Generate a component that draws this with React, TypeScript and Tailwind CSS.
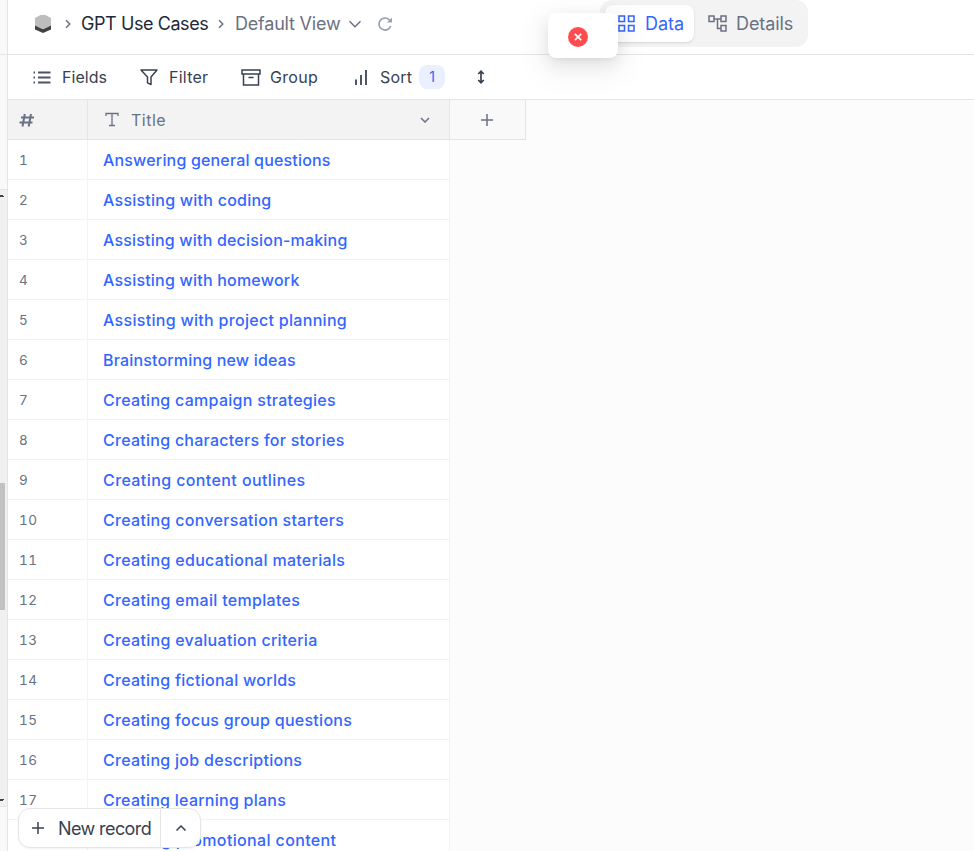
import React from "react";

const titles = [
  { title: "Answering general questions", tracking: "tracking-[0.17px]" },
  { title: "Assisting with coding", tracking: "tracking-[0.24px]" },
  { title: "Assisting with decision-making", tracking: "tracking-[0.19px]" },
  { title: "Assisting with homework", tracking: "tracking-[0.21px]" },
  { title: "Assisting with project planning", tracking: "tracking-[0.3px]" },
  { title: "Brainstorming new ideas", tracking: "tracking-[0.17px]" },
  { title: "Creating campaign strategies", tracking: "tracking-[0.28px]" },
  { title: "Creating characters for stories", tracking: "tracking-[0.26px]" },
  { title: "Creating content outlines", tracking: "tracking-[0.4px]" },
  { title: "Creating conversation starters", tracking: "tracking-[0.3px]" },
  { title: "Creating educational materials", tracking: "tracking-[0.3px]" },
  { title: "Creating email templates", tracking: "tracking-[0.31px]" },
  { title: "Creating evaluation criteria", tracking: "tracking-[0.29px]" },
  { title: "Creating fictional worlds", tracking: "tracking-[0.26px]" },
  { title: "Creating focus group questions", tracking: "tracking-[0.28px]" },
  { title: "Creating job descriptions", tracking: "tracking-[0.28px]" },
  { title: "Creating learning plans", tracking: "tracking-[0.25px]" },
  { title: "Creating promotional content", tracking: "tracking-[0.36px]" },
];

type IconProps = { className?: string; children: React.ReactNode; box: string; sw?: number };

function Icon({ className = "", children, box, sw = 1.5 }: IconProps) {
  return (
    <svg className={`shrink-0 ${className}`} viewBox={box} fill="none" stroke="currentColor" strokeWidth={sw}>
      {children}
    </svg>
  );
}

function Rail() {
  return (
    <div className="flex w-2 shrink-0 flex-col border-r border-[#e5e5e5] bg-[#f9f9f9]">
      <div className="h-[55px] shrink-0 border-b border-[#e5e5e5]" />
      <div className="h-[134px] shrink-0" />
      <div className="flex h-[618px] shrink-0 flex-col border-y border-[#e5e5e5] bg-[#f0f0f0]">
        <svg className="mt-1 h-1 w-[5px] shrink-0" viewBox="0 0 5 4">
          <path d="M0 1h3v1h1v1H0z" fill="#444" />
        </svg>
        <div className="mt-[285px] h-[127px] w-[5px] shrink-0 bg-[#c1c1c1]" />
        <svg className="mt-auto mb-1 h-1 w-[5px] shrink-0" viewBox="0 0 5 4">
          <path d="M0 1h4v1H3v1H0z" fill="#444" />
        </svg>
      </div>
    </div>
  );
}

function Header() {
  return (
    <header className="flex h-[55px] shrink-0 items-start border-b border-[#e5e5e5] bg-white text-[18px] leading-6">
      <div className="flex h-12 items-center">
        <svg className="ml-[27px] h-[18px] w-4" viewBox="0 0 16 18">
          <path d="M0 10l8 4 8-4v4.500L8 18l-8-3.500z" fill="#424242" />
          <path d="M0 3l5.500-3h5L16 3v7.500l-6 3H6l-6-3z" fill="#bdbdbd" />
        </svg>
        <Icon box="0 0 6 10" className="ml-[14px] h-[10px] w-[6px] text-[#6a7183]">
          <path d="M1 1.200l3.800 3.800L1 8.800" />
        </Icon>
        <span className="ml-[10px] w-[128px] whitespace-nowrap tracking-[-0.42px] text-[#1f293a]">GPT Use Cases</span>
        <Icon box="0 0 6 10" className="ml-[9px] h-[10px] w-[6px] text-[#6a7183]">
          <path d="M1 1.200l3.800 3.800L1 8.800" />
        </Icon>
        <span className="ml-[11px] w-[106px] whitespace-nowrap tracking-[-0.2px] text-[#6a7183]">Default View</span>
        <Icon box="0 0 12 8" className="ml-[8px] h-2 w-3 text-[#6a7183]">
          <path d="M.5 1.200L6 6.700l5.500-5.500" />
        </Icon>
        <Icon box="0 0 14 14" className="ml-[17px] h-[14px] w-[14px] text-[#9ca3af]" sw={1.7}>
          <path d="M12.700 9a6 6 0 1 1-1.400-6.200l1 1" />
          <path d="M14 .5v5H9z" fill="currentColor" stroke="none" />
        </Icon>
      </div>
      <div className="ml-[208px] flex h-[47px] w-[208px] rounded-xl bg-[#f3f3f3] pt-[5px] pl-[5px]">
        <div className="flex h-[37px] w-[89px] items-center rounded-lg bg-white pl-[13px] text-[#3366ff] shadow">
          <Icon box="0 0 17 17" className="h-[17px] w-[17px]">
            <path d="M1 1h5.500v5.500H1zM10.500 1H16v5.500h-5.500zM1 10.500h5.500V16H1zM10.500 10.500H16V16h-5.500z" />
          </Icon>
          <span className="ml-[10px]">Data</span>
        </div>
        <div className="flex h-[37px] items-center pl-[14px] text-[#6a7183]">
          <Icon box="0 0 19 17" className="h-[17px] w-[19px]">
            <path d="M1 1h5v5.500H1zM13 1h5v5.500h-5zM13 10.500h5V16h-5zM6 4h7M9.500 4v9.500H13" />
          </Icon>
          <span className="ml-[9px] tracking-[-0.1px]">Details</span>
        </div>
      </div>
    </header>
  );
}

function Toolbar() {
  return (
    <div className="flex h-[45px] shrink-0 items-center border-b border-[#e5e5e5] text-base text-[#374151]">
      <Icon box="0 0 18 13" className="ml-[25px] h-[13px] w-[18px] text-[#4b5567]" sw={1.8}>
        <path d="M5 1.500h12.500M5 6.500h12.500M5 11.500h12.500" />
        <path d="M.5 1.500H2M.5 6.500H2M.5 11.500H2" />
      </Icon>
      <span className="ml-[11px] w-[45px] whitespace-nowrap tracking-[0.05px]">Fields</span>
      <Icon box="0 0 18 17" className="ml-[33px] h-[17px] w-[18px]">
        <path d="M1 1h16l-6 7v7.500l-3.500-1.700V8z" strokeLinejoin="round" />
      </Icon>
      <span className="ml-[11px] w-[40px] whitespace-nowrap tracking-[0.25px]">Filter</span>
      <Icon box="0 0 20 17" className="ml-[32px] h-[17px] w-5">
        <path d="M1 1h18v4H1zM2.500 5v11h15V5M7.500 8.500h5" />
      </Icon>
      <span className="ml-[9px] w-[48px] whitespace-nowrap tracking-[0.3px]">Group</span>
      <Icon box="0 0 13 16" className="ml-[36px] h-4 w-[13px] text-[#4b5567]" sw={2}>
        <path d="M2 10.500V16M7 6v10M12 1v15" />
      </Icon>
      <span className="ml-[13px] w-[33px] whitespace-nowrap tracking-[0.2px]">Sort</span>
      <span className="ml-[6px] flex h-6 w-[26px] items-center justify-center rounded-lg bg-[#ebf0ff] text-sm text-[#3366ff]">1</span>
      <Icon box="0 0 8 14" className="ml-[32px] h-[14px] w-2" sw={1.7}>
        <path d="M4 1.500v11M1.200 4L4 1.300 6.800 4M1.200 10L4 12.700 6.800 10" />
      </Icon>
    </div>
  );
}

function Grid() {
  return (
    <div className="min-h-0 flex-1 overflow-hidden bg-[#fcfcfc]">
      <div className="flex h-10 text-[16px] text-[#6a7183]">
        <div className="flex w-20 items-center border-r border-b border-[#e5e5e5] bg-[#f3f3f3] pl-[11px]">
          <Icon box="0 0 15 14" className="h-[14px] w-[15px]" sw={2}>
            <path d="M2 4.500h13M.5 9.500h13M5.800 1L3.500 13.500M12 1L9.700 13.500" />
          </Icon>
        </div>
        <div className="flex w-[362px] items-center border-r border-b border-[#e5e5e5] bg-[#f3f3f3] pl-[17px]">
          <Icon box="0 0 14 15" className="h-[15px] w-[14px]" sw={1.3}>
            <path d="M1 4V1.500h12V4M7 1.500v12M4 13.500h6" />
          </Icon>
          <span className="ml-[12px] tracking-[0.5px]">Title</span>
          <Icon box="0 0 10 6" className="mr-[19px] ml-auto h-[6px] w-[10px]">
            <path d="M1 1l4 4 4-4" />
          </Icon>
        </div>
        <div className="flex w-[76px] items-center border-r border-b border-[#e5e5e5] bg-[#f9f9f9] pl-[31px]">
          <Icon box="0 0 12 12" className="h-3 w-3">
            <path d="M6 0v12M0 6h12" />
          </Icon>
        </div>
      </div>
      {titles.map(({ title, tracking }, i) => (
        <div key={title} className="flex h-10 w-[442px] bg-white">
          <div className="flex w-20 items-center border-r border-b border-[#f3f3f3] pt-px pl-[11px] text-[13.5px] tracking-[0.6px] text-[#6a7183] tabular-nums">
            {i < 17 ? i + 1 : ""}
          </div>
          <div className="flex w-[362px] items-center border-r border-b border-[#f3f3f3] pl-[15px] text-base font-medium whitespace-nowrap text-[#3366ff]">
            <span className={tracking}>{title}</span>
          </div>
        </div>
      ))}
    </div>
  );
}

export default function App() {
  return (
    <div className="relative flex h-[851px] w-[974px] overflow-hidden bg-white font-['Inter',sans-serif]">
      <Rail />
      <main className="flex min-w-0 flex-1 flex-col">
        <Header />
        <Toolbar />
        <Grid />
      </main>
      <div className="absolute top-[13px] left-[548px] flex h-[45px] w-[70px] items-center rounded-lg bg-white pt-[3px] pl-5 shadow-[0_6px_16px_0_rgba(0,0,0,0.08),0_3px_6px_-4px_rgba(0,0,0,0.12),0_9px_28px_8px_rgba(0,0,0,0.05)]">
        <svg className="h-5 w-5" viewBox="0 0 20 20">
          <circle cx="10" cy="10" r="10" fill="#ff4d4f" />
          <path d="M6.800 6.800l6.400 6.400M13.200 6.800l-6.400 6.400" stroke="white" strokeWidth="1.700" />
        </svg>
      </div>
      <div className="absolute top-[808px] left-[18px] flex h-10 w-[183px] rounded-xl border border-[#e5e5e5] bg-white text-[18px] text-[#374151] shadow-xs">
        <div className="flex w-[142px] items-center border-r border-[#e5e5e5] pl-[13px]">
          <Icon box="0 0 12 12" className="h-3 w-3">
            <path d="M6 0v12M0 6h12" />
          </Icon>
          <span className="ml-[14px] whitespace-nowrap tracking-[-0.6px]">New record</span>
        </div>
        <div className="flex flex-1 items-center justify-center">
          <Icon box="0 0 10 6" className="h-[6px] w-[10px]">
            <path d="M.5 5.500L5 1l4.500 4.500" />
          </Icon>
        </div>
      </div>
    </div>
  );
}
